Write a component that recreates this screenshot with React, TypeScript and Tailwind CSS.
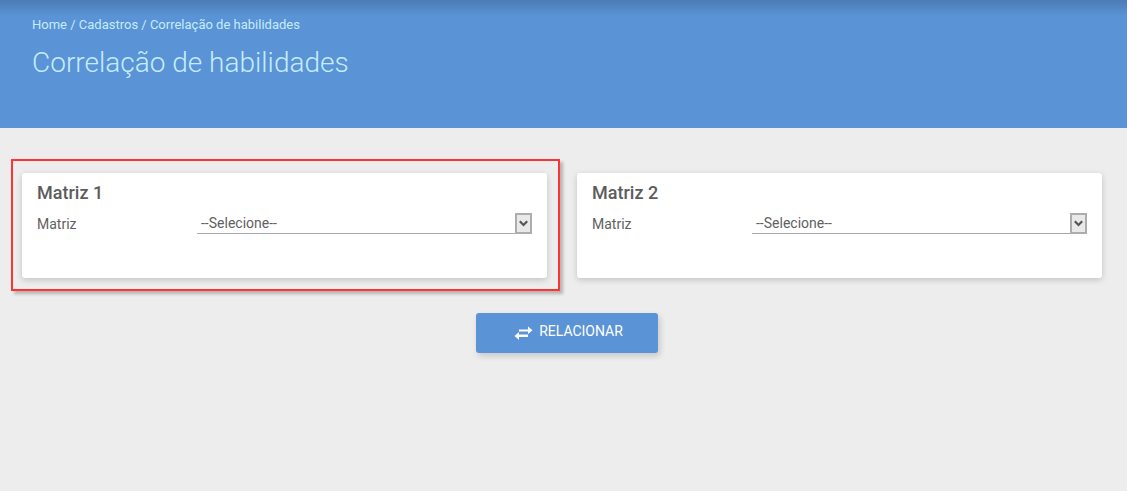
const roboto = "font-['Roboto',sans-serif]";

function MatrizCard({ title }: { title: string }) {
  return (
    <div className="h-[105px] rounded-[3px] bg-white px-[15px] pt-[8px] shadow-[0_2px_6px_rgba(0,0,0,0.18)]">
      <h3 className="text-[18px] leading-[24px] font-medium text-[#5c5c5c]">{title}</h3>
      <div className="mt-[8px] flex items-start">
        <label className="w-[160px] pt-[1px] text-[14px] leading-[20px] text-[#5f5f5f]">Matriz</label>
        <div className="flex h-[21px] flex-1 justify-between border-b border-[#aaaaaa]">
          <span className="pl-[4px] text-[14px] leading-[20px] text-[#5f5f5f]">--Selecione--</span>
          <span className="flex h-[21px] w-[17px] shrink-0 items-center justify-center border-2 border-[#adadad] bg-[#e9e9e9]">
            <svg width="9" height="7" viewBox="0 0 9 7">
              <path d="M0.8 1.2 L4.5 5 L8.2 1.2" fill="none" stroke="#555555" strokeWidth="2.2" />
            </svg>
          </span>
        </div>
      </div>
    </div>
  );
}

export default function App() {
  return (
    <div className={`${roboto} flex h-[491px] flex-col overflow-hidden bg-[#ededed]`}>
      <header className="h-[128px] bg-[#5a93d6] bg-[linear-gradient(to_bottom,#4a7cb5_0px,#5a93d6_16px)] px-[32px] pt-[16px] text-[#c5ecfb]">
        <div className="text-[13px] leading-[18px]">Home / Cadastros / Correlação de habilidades</div>
        <h1 className="mt-[9px] text-[28px] leading-[40px] font-light">Correlação de habilidades</h1>
      </header>

      <main className="pt-[45px] pr-[25px] pl-[22px]">
        <div className="grid grid-cols-2 gap-[30px]">
          <div className="relative">
            <MatrizCard title="Matriz 1" />
            <div className="absolute -top-[14px] -right-[13px] -bottom-[13px] -left-[11px] border-2 border-[#ff3333] shadow-[3px_3px_3px_rgba(0,0,0,0.24)]" />
          </div>
          <MatrizCard title="Matriz 2" />
        </div>

        <div className="mt-[35px] flex justify-center">
          <button className="ml-[9px] flex h-[40px] w-[182px] items-center justify-center gap-[6px] rounded-[3px] bg-[#5a93d6] pb-[3px] pl-[4px] text-[14px] text-white shadow-[2px_3px_6px_rgba(0,0,0,0.16)]">
            <svg width="19" height="15" viewBox="0 0 19 15" className="mt-[4px]">
              <path d="M5 3.5 H14 V0.5 L18.5 4.2 L14 8 V5.5 H5 Z" fill="#ffffff" />
              <path d="M14 8.5 H5 V6 L0.5 10 L5 14 V11 H14 Z" fill="#ffffff" />
            </svg>
            RELACIONAR
          </button>
        </div>
      </main>
    </div>
  );
}
